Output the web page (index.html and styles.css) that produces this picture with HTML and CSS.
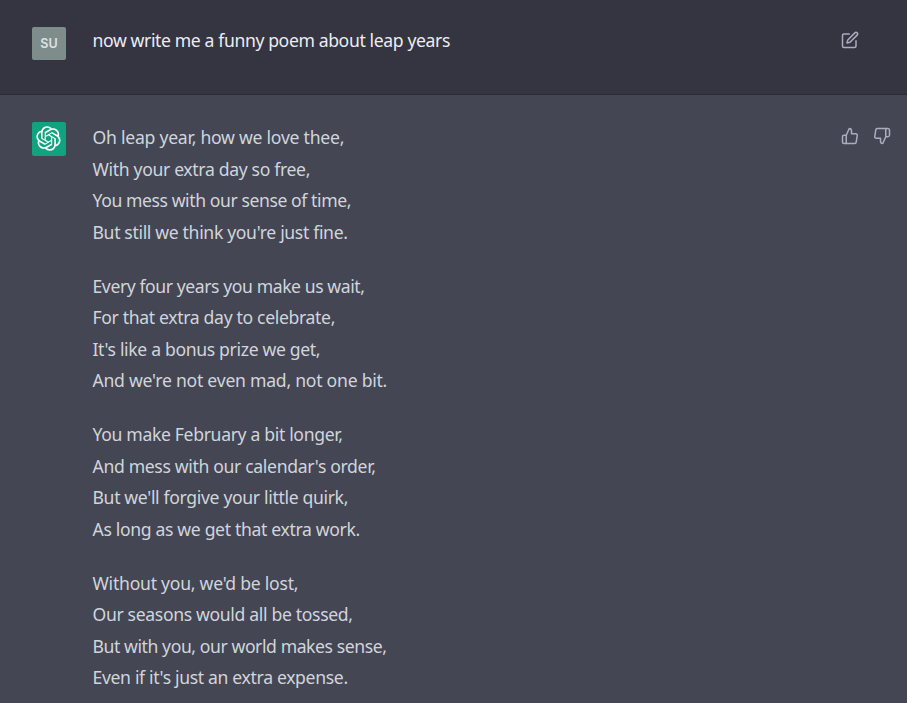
FILE: index.html
```html
<!DOCTYPE html>
<html lang="en">
<head>
<meta charset="utf-8">
<title>Leap year poem</title>
<link rel="stylesheet" href="styles.css">
</head>
<body>
<main class="chat">
  <section class="message message-user">
    <div class="avatar avatar-user">SU</div>
    <div class="content prompt">now write me a funny poem about leap years</div>
    <div class="actions">
      <svg class="icon" viewBox="0 0 24 24"><path d="M11 4H4a2 2 0 0 0-2 2v14a2 2 0 0 0 2 2h14a2 2 0 0 0 2-2v-7"/><path d="M18.5 2.5a2.121 2.121 0 0 1 3 3L12 15l-4 1 1-4 9.500-9.500z"/></svg>
    </div>
  </section>
  <section class="message message-bot">
    <div class="avatar avatar-bot">
      <svg class="logo" viewBox="0 0 41 41"><path d="M37.532 16.87a9.963 9.963 0 0 0-.856-8.184 10.078 10.078 0 0 0-10.855-4.835A9.964 9.964 0 0 0 18.306.5a10.079 10.079 0 0 0-9.614 6.977 9.967 9.967 0 0 0-6.664 4.834 10.08 10.08 0 0 0 1.24 11.817 9.965 9.965 0 0 0 .856 8.185 10.079 10.079 0 0 0 10.855 4.835 9.965 9.965 0 0 0 7.516 3.35 10.078 10.078 0 0 0 9.617-6.981 9.967 9.967 0 0 0 6.663-4.834 10.079 10.079 0 0 0-1.243-11.813zM22.498 37.886a7.474 7.474 0 0 1-4.799-1.735c.061-.033.168-.091.237-.134l7.964-4.6a1.294 1.294 0 0 0 .655-1.134V19.054l3.366 1.944a.12.12 0 0 1 .066.092v9.299a7.505 7.505 0 0 1-7.49 7.496zM6.392 31.006a7.471 7.471 0 0 1-.894-5.023c.06.036.162.099.237.141l7.964 4.6a1.297 1.297 0 0 0 1.308 0l9.724-5.614v3.888a.12.12 0 0 1-.048.103l-8.051 4.649a7.504 7.504 0 0 1-10.24-2.744zM4.297 13.62A7.469 7.469 0 0 1 8.2 10.333c0 .068-.004.19-.004.274v9.201a1.294 1.294 0 0 0 .654 1.132l9.723 5.614-3.366 1.944a.12.12 0 0 1-.114.01L7.04 23.856a7.504 7.504 0 0 1-2.743-10.237zm27.658 6.437-9.724-5.615 3.367-1.943a.121.121 0 0 1 .113-.01l8.052 4.648a7.498 7.498 0 0 1-1.158 13.528v-9.476a1.293 1.293 0 0 0-.65-1.132zm3.35-5.043c-.059-.037-.162-.099-.236-.141l-7.965-4.6a1.298 1.298 0 0 0-1.308 0l-9.723 5.614v-3.888a.12.12 0 0 1 .048-.103l8.05-4.645a7.497 7.497 0 0 1 11.135 7.763zm-21.063 6.929-3.367-1.944a.12.12 0 0 1-.065-.092v-9.299a7.497 7.497 0 0 1 12.293-5.756 6.94 6.94 0 0 0-.236.134l-7.965 4.6a1.294 1.294 0 0 0-.654 1.132l-.006 11.225zm1.829-3.943 4.33-2.501 4.332 2.5v5l-4.331 2.5-4.331-2.5V18z"/></svg>
    </div>
    <div class="content poem">
      <p><span class="loose">Oh leap year, how we love thee,</span><br>With your extra day so free,<br><span class="tight">You mess with our sense of time,</span><br>But still we think you're just fine.</p>
      <p><span class="tight">Every four years you make us wait,</span><br>For that extra day to celebrate,<br>It's like a bonus prize we get,<br><span class="loose">And we're not even mad, not one bit.</span></p>
      <p>You make February a bit longer,<br>And mess with our calendar's order,<br>But we'll forgive your little quirk,<br>As long as we get that extra work.</p>
      <p><span class="loose">Without you, we'd be lost,</span><br>Our seasons would all be tossed,<br><span class="tight">But with you, our world makes sense,</span><br>Even if it's just an extra expense.</p>
    </div>
    <div class="actions">
      <svg class="icon" viewBox="0 0 24 24"><path d="M14 9V5a3 3 0 0 0-3-3l-4 9v11h11.280a2 2 0 0 0 2-1.700l1.380-9a2 2 0 0 0-2-2.300zM7 22H4a2 2 0 0 1-2-2v-7a2 2 0 0 1 2-2h3"/></svg>
      <svg class="icon" viewBox="0 0 24 24"><path d="M10 15v4a3 3 0 0 0 3 3l4-9V2H5.720a2 2 0 0 0-2 1.700l-1.380 9a2 2 0 0 0 2 2.300zm7-13h2.670A2.310 2.310 0 0 1 22 4v7a2.310 2.310 0 0 1-2.330 2H17"/></svg>
    </div>
  </section>
</main>
</body>
</html>
```
FILE: styles.css
```css
* { box-sizing: border-box; }
body {
  margin: 0;
  background: #444654;
  font-family: "Segoe UI", "Noto Sans", sans-serif;
  font-size: 17.6px;
  overflow: hidden;
}
.chat { height: 703px; overflow: hidden; }
.message {
  display: flex;
  align-items: flex-start;
  padding: 27px 17.5px 0 32px;
}
.message-user {
  height: 95px;
  background: #343541;
  border-bottom: 1px solid #2a2b35;
}
.message-bot { height: 608px; background: #444654; }
.avatar {
  display: flex;
  align-items: center;
  justify-content: center;
  flex: none;
  width: 34px;
  height: 34px;
  border-radius: 2px;
}
.avatar-user {
  height: 33px;
  padding-bottom: 1px;
  background: #7f8c8c;
  color: #dde2e2;
  font: 600 12.5px "Inter", sans-serif;
}
.avatar-bot { padding: 0 1px 1px 0; background: #10a37f; }
.logo { width: 25px; height: 25px; fill: #fff; }
.content {
  flex: 1;
  margin-left: 26.5px;
  white-space: nowrap;
  letter-spacing: -0.34px;
}
.prompt { color: #ececf1; line-height: 27px; letter-spacing: -0.38px; }
.poem { color: #d1d5db; line-height: 31.5px; }
.poem p { margin: 0 0 22.5px; }
.tight { letter-spacing: -0.42px; }
.loose { letter-spacing: -0.25px; }
.actions { display: flex; gap: 14px; padding-top: 5px; width: 49px; }
.message-user .actions { padding-top: 4px; }
.icon {
  flex: none;
  width: 18px;
  height: 18px;
  fill: none;
  stroke: #acacbe;
  stroke-width: 2;
  stroke-linecap: round;
  stroke-linejoin: round;
}
```
